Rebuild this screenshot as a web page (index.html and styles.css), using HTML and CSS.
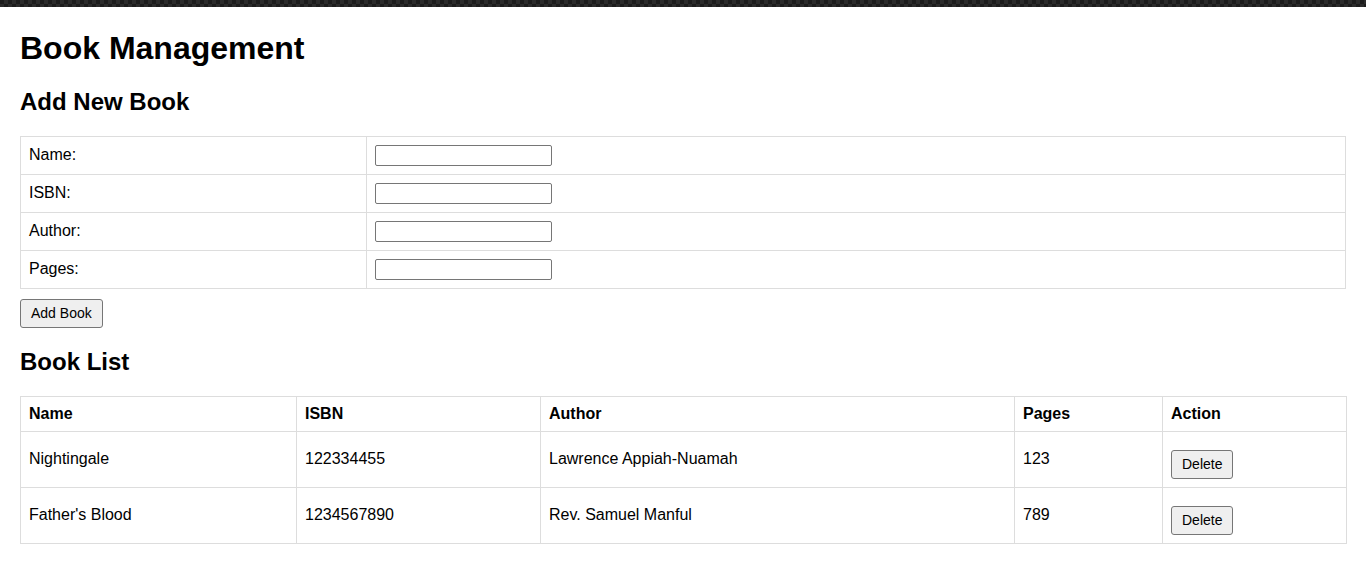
FILE: index.html
```html
<!DOCTYPE html>
<html lang="en">
<head>
<meta charset="utf-8">
<title>Book Management</title>
<link rel="stylesheet" href="styles.css">
</head>
<body>
<div class="strip"></div>
<main class="page">
  <h1>Book Management</h1>
  <h2>Add New Book</h2>
  <form class="add-form">
    <table class="grid form-table">
      <colgroup><col class="c-label"><col></colgroup>
      <tr><td>Name:</td><td><input type="text" class="field"></td></tr>
      <tr><td>ISBN:</td><td><input type="text" class="field"></td></tr>
      <tr><td>Author:</td><td><input type="text" class="field"></td></tr>
      <tr><td>Pages:</td><td><input type="text" class="field"></td></tr>
    </table>
    <button type="button" class="btn">Add Book</button>
  </form>
  <h2>Book List</h2>
  <table class="grid list-table">
    <colgroup>
      <col class="c-name"><col class="c-isbn"><col class="c-author"><col class="c-pages"><col class="c-action">
    </colgroup>
    <thead>
      <tr><th>Name</th><th>ISBN</th><th>Author</th><th>Pages</th><th>Action</th></tr>
    </thead>
    <tbody>
      <tr><td>Nightingale</td><td>122334455</td><td>Lawrence Appiah-Nuamah</td><td>123</td><td><button type="button" class="btn">Delete</button></td></tr>
      <tr><td>Father's Blood</td><td>1234567890</td><td>Rev. Samuel Manful</td><td>789</td><td><button type="button" class="btn">Delete</button></td></tr>
    </tbody>
  </table>
</main>
</body>
</html>
```
FILE: styles.css
```css
html, body {
  margin: 0;
  padding: 0;
  background: #fff;
}
body {
  font-family: "Liberation Sans", Arial, sans-serif;
  font-size: 16px;
  color: #000;
}
.strip {
  height: 7px;
  background-color: #1c1c1c;
  background-image:
    linear-gradient(45deg, #2b2b2b 25%, transparent 25%, transparent 75%, #2b2b2b 75%),
    linear-gradient(45deg, #2b2b2b 25%, transparent 25%, transparent 75%, #2b2b2b 75%);
  background-size: 8px 8px;
  background-position: 0 0, 4px 4px;
}
.page {
  padding: 0 20px 20px;
  overflow: hidden;
}
h1 {
  font-size: 32px;
  font-weight: bold;
  margin: 22.5px 0 21.44px;
}
h2 {
  font-size: 24px;
  font-weight: bold;
  margin: 19.92px 0;
}
.add-form {
  margin: 0;
}
.grid {
  width: 100%;
  border-collapse: collapse;
  table-layout: fixed;
}
.grid td, .grid th {
  border: 1px solid #ddd;
  padding: 8px;
  text-align: left;
  vertical-align: middle;
}
.grid th {
  font-weight: bold;
}
.c-label { width: 346px; }
.c-name { width: 276px; }
.c-isbn { width: 244px; }
.c-author { width: 474px; }
.c-pages { width: 148px; }
.c-action { width: 184px; }
.field {
  box-sizing: border-box;
  width: 177px;
  height: 21px;
  margin: 0;
  padding: 1px 2px;
  border: 1px solid #767676;
  border-radius: 2px;
  font-family: "Liberation Sans", Arial, sans-serif;
  font-size: 13.33px;
  vertical-align: middle;
  background: #fff;
}
.btn {
  margin: 10px 0 0;
  padding: 5px 10px;
  font-family: "Liberation Sans", Arial, sans-serif;
  font-size: 14px;
  line-height: 17px;
  color: #000;
  background: #efefef;
  border: 1px solid #767676;
  border-radius: 3px;
  cursor: pointer;
}
```
